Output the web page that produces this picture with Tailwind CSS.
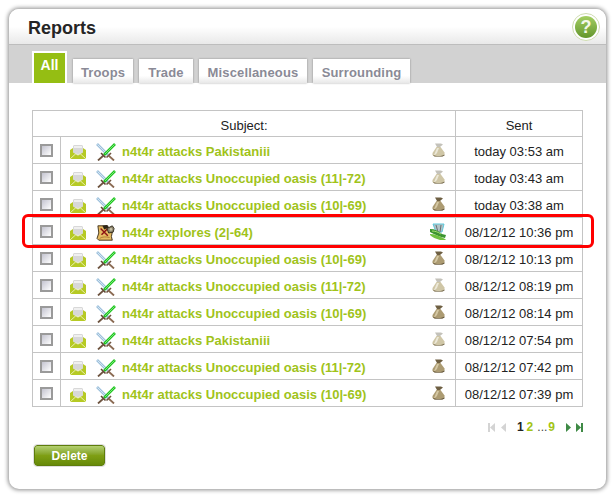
<!DOCTYPE html>
<html lang="en">
<head>
  <meta charset="UTF-8" />
  <title>Reports</title>
  <script src="https://cdn.jsdelivr.net/npm/@tailwindcss/browser@4"></script>
</head>
<body class="relative w-[616px] h-[499px] overflow-hidden bg-white font-['Liberation_Sans',Arial,sans-serif]">

  <!-- Shared icons -->
  <svg width="0" height="0" class="absolute">
    <symbol id="mail" viewBox="0 0 16 14">
      <path d="M0 5 3 3h10l3 2v9H0z" fill="#b6ca24"/>
      <path d="M3 1 4 0h8l1 1v6.500L8 10.500 3 7.500z" fill="#d8d8d8"/>
      <path d="M4 1h8v2H4z" fill="#f0f0f0"/>
      <path d="M0 14 6 8.500l2 1.500 2-1.500L16 14" fill="none" stroke="#eef3c0" stroke-width=".9"/>
    </symbol>
    <symbol id="swords" viewBox="0 0 20 18">
      <path d="M1 1 12 12" stroke="#9cc0dc" stroke-width="2.600"/>
      <path d="M1.500 1.500 11 11" stroke="#e4eff8" stroke-width=".8"/>
      <path d="M10.500 14.500 15 10" stroke="#6e5440" stroke-width="1.600"/>
      <path d="M12.500 12.500 18 17.500" stroke="#8a6a52" stroke-width="1.800"/>
      <path d="M19 1 8 12" stroke="#1fc41f" stroke-width="2.600"/>
      <path d="M18.500 1.500 9 11" stroke="#90f090" stroke-width=".8"/>
      <path d="M5 10 9.500 14.500" stroke="#5e4634" stroke-width="1.600"/>
      <path d="M7.500 12.500 2 17.500" stroke="#6e5440" stroke-width="1.800"/>
    </symbol>
    <symbol id="scroll" viewBox="0 0 20 20">
      <path d="M1 2h11l1 5 4 2-1 5 1 4H2L0 16l2-6z" fill="#e6bb62" stroke="#3a2a14"/>
      <path d="M3 16c3-2 7-2 11-1" fill="none" stroke="#a87a30"/>
      <path d="M4 5l8 8M12 5l-7 7" stroke="#8c1414" stroke-width="1.600"/>
      <path d="M6 2l5-1 2 3-5 2z" fill="#2c2418"/>
      <path d="M11 5l6-3 2 3-1 4-5 1z" fill="#8e866e" stroke="#2f2818"/>
      <circle cx="15.500" cy="6" r="1.500" fill="#c8c2a8"/>
    </symbol>
    <symbol id="bag" viewBox="0 0 14 14">
      <path d="M3 0.500h6l2 1-3 2.500H5z" fill="#6e5f42"/>
      <path d="M4.500 4h4l4 5.500c.5 2.500-1 4-3 4H3.500c-2 0-3.500-1-3-3.500z" fill="#ac9b72"/>
      <path d="M5 5h2L5 10 3 12H2z" fill="#d5c8a4"/>
      <path d="M.5 11.500c3 2 9 2 12 0v1l-2 1h-8z" fill="#54472e"/>
    </symbol>
    <symbol id="bag-empty" viewBox="0 0 14 14">
      <path d="M3 0.500h6l2 1-3 2.500H5z" fill="#c4c2ba"/>
      <path d="M4.500 4h4l4 5.500c.5 2.500-1 4-3 4H3.500c-2 0-3.500-1-3-3.500z" fill="#cfc6a6"/>
      <path d="M5 5h2L5 10 3 12H2z" fill="#ece8d8"/>
      <path d="M.5 11.500c3 2 9 2 12 0v1l-2 1h-8z" fill="#6a5e42"/>
    </symbol>
    <symbol id="treasure" viewBox="0 0 16 17">
      <path d="M3 1h11l-2 8H6z" fill="#b4c2c4" stroke="#5cc8dc"/>
      <path d="M6 2l2 7M11 2l-1 7" stroke="#667074"/>
      <path d="M0 6c5 0 9 2 12 5l4 1-1 3C10 14 4 11 0 9z" fill="#3c9430"/>
      <path d="M0 11c5 0 10 2 15 5l1 1h-6C6 16 2 14 0 12z" fill="#70c040"/>
      <path d="M2 8c3 0 6 1 9 3" fill="none" stroke="#a8e070"/>
    </symbol>
  </svg>

  <!-- Main card -->
  <section class="absolute left-[9px] top-[9px] w-[597px] h-[480px] rounded-[10px] bg-white shadow-[0_0_4px_1px_rgba(0,0,0,0.45)] overflow-hidden">

    <header class="h-[36px] border-b border-[#bdbdbd] bg-linear-to-b from-white from-50% to-[#e9e9e9] pl-[19px] pt-[8px] relative">
      <h1 class="text-[18px] leading-[22px] font-bold text-[#252525]">Reports</h1>
      <div class="absolute left-[563px] top-[4px] w-[28px] h-[28px] rounded-full border border-[#cfdcb0] bg-white p-[2px]">
        <div class="w-full h-full rounded-full bg-linear-to-b from-[#a4cf62] to-[#64962c] flex items-center justify-center text-[#f4f8e8] text-[18px] leading-none font-bold">?</div>
      </div>
    </header>

    <nav class="h-[38px] bg-[#d2d2d2] flex items-end pl-[23px] gap-[6px] text-[13px] tracking-[0.15px] font-bold text-[#8a8a96]">
      <a class="w-[35px] h-[32px] bg-[#95be13] border-2 border-b-0 border-white text-white text-center text-[14px] tracking-normal leading-[24px]">All</a>
      <a class="w-[60px] h-[24px] bg-linear-to-b from-white from-70% to-[#e8e8e8] shadow-[0_0_2px_rgba(0,0,0,0.35)] text-center leading-[27px]">Troops</a>
      <a class="w-[54px] h-[24px] bg-linear-to-b from-white from-70% to-[#e8e8e8] shadow-[0_0_2px_rgba(0,0,0,0.35)] text-center leading-[27px]">Trade</a>
      <a class="w-[108px] h-[24px] bg-linear-to-b from-white from-70% to-[#e8e8e8] shadow-[0_0_2px_rgba(0,0,0,0.35)] text-center leading-[27px]">Miscellaneous</a>
      <a class="w-[97px] h-[24px] bg-linear-to-b from-white from-70% to-[#e8e8e8] shadow-[0_0_2px_rgba(0,0,0,0.35)] text-center leading-[27px]">Surrounding</a>
    </nav>

    <div class="pl-[23px] pt-[27px]">
      <table class="w-[550px] table-fixed border-collapse text-[13px] text-[#222]">
        <colgroup>
          <col class="w-[28px]" />
          <col class="w-[395px]" />
          <col class="w-[127px]" />
        </colgroup>
        <thead>
          <tr class="h-[26px]">
            <th colspan="2" class="border border-[#c4c4c4] font-normal p-0 pt-[4px]">Subject:</th>
            <th class="border border-[#c4c4c4] font-normal p-0 pt-[4px]">Sent</th>
          </tr>
        </thead>
        <tbody id="rows"></tbody>
      </table>

      <div class="w-[551px] flex justify-end items-center h-[14px] mt-[13px] text-[12px] font-bold">
        <svg width="7" height="9" viewBox="0 0 7 9" class="mr-[6px]" fill="#d4d4d4"><path d="M0 0h2v9H0zM7 0v9L2 4.500z"/></svg>
        <svg width="5" height="9" viewBox="0 0 5 9" class="mr-[11px]" fill="#d4d4d4"><path d="M5 0v9L0 4.500z"/></svg>
        <span class="text-[#222] mr-[3px]">1</span>
        <span class="text-[#a3c415] mr-[4px]">2</span>
        <span class="text-[#444] font-normal mr-[1px]">...</span>
        <span class="text-[#a3c415] mr-[11px]">9</span>
        <svg width="5" height="9" viewBox="0 0 5 9" class="mr-[5px]" fill="#3f8a46"><path d="M0 0v9l5-4.500z"/></svg>
        <svg width="7" height="9" viewBox="0 0 7 9" fill="#3f8a46"><path d="M0 0v9l5-4.500zM5 0h2v9H5z"/></svg>
      </div>

      <button class="block mt-[11px] pt-[1px] w-[71px] h-[21px] ml-[2px] rounded-[3px] border border-[#5e7d0c] outline-1 outline-[#dedede] bg-linear-to-b from-[#b4d070] from-0% via-[#7f9f14] via-50% to-[#668a08] text-white text-[12px] font-bold">Delete</button>
    </div>
  </section>

  <!-- Red highlight drawn over the screenshot -->
  <div class="absolute left-[22px] top-[214px] w-[572px] h-[34px] border-[3px] border-[#ff0000] rounded-[6px]"></div>

<script>
  const reports = [
    ["swords", "n4t4r attacks Pakistaniii", "bag-empty", "today 03:53 am"],
    ["swords", "n4t4r attacks Unoccupied oasis (11|-72)", "bag-empty", "today 03:43 am"],
    ["swords", "n4t4r attacks Unoccupied oasis (10|-69)", "bag", "today 03:38 am"],
    ["scroll", "n4t4r explores (2|-64)", "treasure", "08/12/12 10:36 pm"],
    ["swords", "n4t4r attacks Unoccupied oasis (10|-69)", "bag", "08/12/12 10:13 pm"],
    ["swords", "n4t4r attacks Unoccupied oasis (11|-72)", "bag-empty", "08/12/12 08:19 pm"],
    ["swords", "n4t4r attacks Unoccupied oasis (10|-69)", "bag", "08/12/12 08:14 pm"],
    ["swords", "n4t4r attacks Pakistaniii", "bag-empty", "08/12/12 07:54 pm"],
    ["swords", "n4t4r attacks Unoccupied oasis (11|-72)", "bag", "08/12/12 07:42 pm"],
    ["swords", "n4t4r attacks Unoccupied oasis (10|-69)", "bag", "08/12/12 07:39 pm"],
  ];

  document.getElementById("rows").innerHTML = reports.map(r => `
    <tr class="h-[27px]">
      <td class="border border-[#c4c4c4] p-0">
        <div class="mx-auto w-[13px] h-[13px] border-2 border-[#9a9a9a] bg-linear-to-br from-[#c4c4d0] to-white"></div>
      </td>
      <td class="border border-[#c4c4c4] p-0">
        <div class="flex items-center pl-[9px] h-[26px]">
          <svg class="w-[16px] h-[14px] mt-[3px]"><use href="#mail"/></svg>
          <svg class="w-[20px] h-[18px] ml-[10px] mt-[3px]"><use href="#${r[0]}"/></svg>
          <a class="ml-[6px] mt-[3px] font-bold text-[#a0c31a]">${r[1]}</a>
          <svg class="${r[2] == "treasure" ? "w-[16px] h-[17px] mr-[9px]" : "w-[14px] h-[14px] mr-[9px]"} ml-auto"><use href="#${r[2]}"/></svg>
        </div>
      </td>
      <td class="border border-[#c4c4c4] p-0 pt-[3px] text-center">${r[3]}</td>
    </tr>
  `).join("");
</script>

</body>
</html>
